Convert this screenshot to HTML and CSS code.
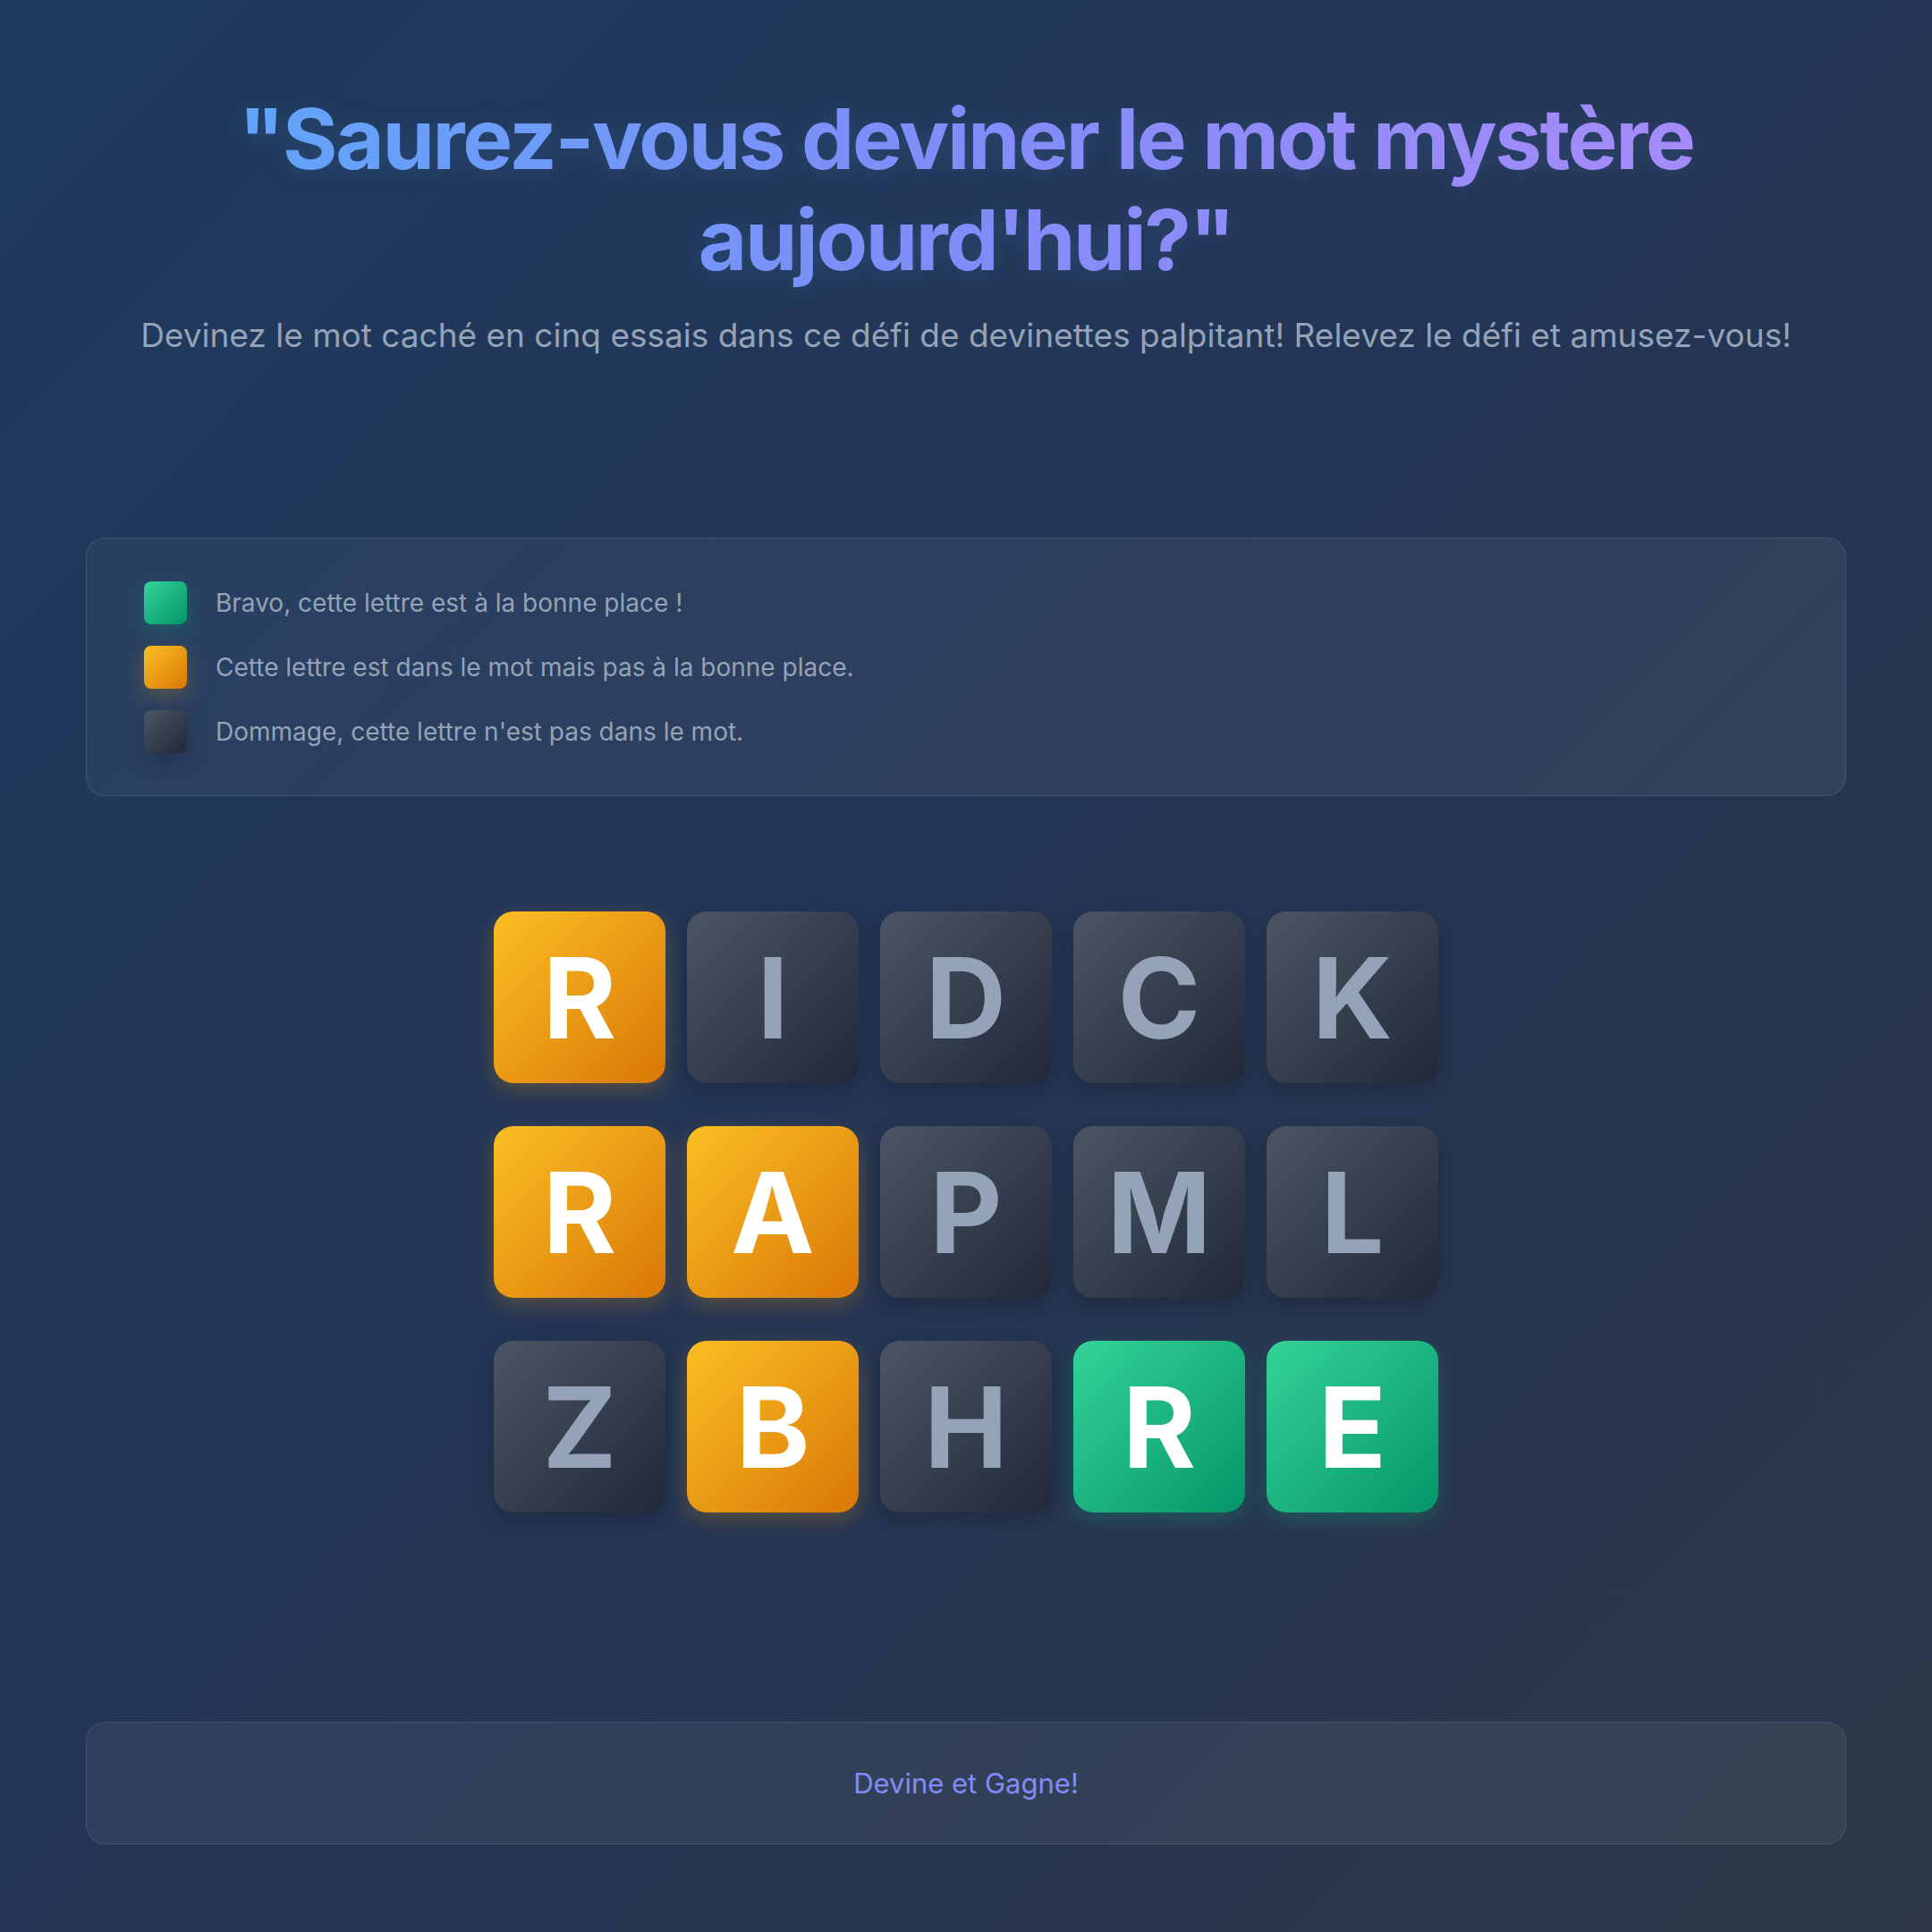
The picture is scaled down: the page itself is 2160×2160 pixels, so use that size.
FILE: index.html
```html
<!DOCTYPE html>
<html lang="fr">
<head>
<meta charset="utf-8">
<title>Devine et Gagne</title>
<link rel="stylesheet" href="styles.css">
</head>
<body>
<main class="page">
  <header class="hero">
    <h1 class="title">"Saurez-vous deviner le mot mystère aujourd'hui?"</h1>
    <p class="subtitle">Devinez le mot caché en cinq essais dans ce défi de devinettes palpitant! Relevez le défi et amusez-vous!</p>
  </header>

  <section class="legend">
    <div class="legend-row"><span class="swatch good"></span><span class="legend-text">Bravo, cette lettre est à la bonne place !</span></div>
    <div class="legend-row"><span class="swatch near"></span><span class="legend-text">Cette lettre est dans le mot mais pas à la bonne place.</span></div>
    <div class="legend-row"><span class="swatch miss"></span><span class="legend-text">Dommage, cette lettre n'est pas dans le mot.</span></div>
  </section>

  <section class="board">
    <div class="tile near">R</div>
    <div class="tile miss">I</div>
    <div class="tile miss">D</div>
    <div class="tile miss">C</div>
    <div class="tile miss">K</div>
    <div class="tile near">R</div>
    <div class="tile near">A</div>
    <div class="tile miss">P</div>
    <div class="tile miss">M</div>
    <div class="tile miss">L</div>
    <div class="tile miss">Z</div>
    <div class="tile near">B</div>
    <div class="tile miss">H</div>
    <div class="tile good">R</div>
    <div class="tile good">E</div>
  </section>

  <footer class="footer">
    <span class="footer-text">Devine et Gagne!</span>
  </footer>
</main>
</body>
</html>
```

FILE: styles.css
```css
html, body {
  margin: 0;
  padding: 0;
}

body {
  min-height: 2160px;
  background: linear-gradient(135deg, #1e3a5f 0%, #243555 50%, #2d3748 100%);
  font-family: Inter, "Noto Sans", sans-serif;
  color: #94a3b8;
}

.page {
  box-sizing: border-box;
  width: 2160px;
  height: 2160px;
  padding: 99px 96px 0;
  display: flex;
  flex-direction: column;
}

.hero {
  text-align: center;
}

.title {
  margin: 0 auto;
  max-width: 1700px;
  font-size: 94px;
  line-height: 113px;
  font-weight: 700;
  letter-spacing: -0.025em;
  background: linear-gradient(90deg, #60a5fa 0%, #818cf8 50%, #a78bfa 100%);
  -webkit-background-clip: text;
  background-clip: text;
  color: transparent;
  filter: drop-shadow(0 4px 12px rgba(96, 165, 250, 0.15));
}

.subtitle {
  margin: 21px 0 0;
  font-size: 37px;
  line-height: 57px;
  color: #94a3b8;
}

.legend {
  margin-top: 198px;
  box-sizing: border-box;
  height: 289px;
  padding: 48px 64px;
  border: 1px solid rgba(148, 163, 184, 0.2);
  border-radius: 22px;
  background: linear-gradient(135deg, rgba(255, 255, 255, 0.04), rgba(255, 255, 255, 0.06));
  display: flex;
  flex-direction: column;
  gap: 24px;
}

.legend-row {
  display: flex;
  align-items: center;
  gap: 32px;
  height: 48px;
}

.swatch {
  flex: none;
  width: 48px;
  height: 48px;
  border-radius: 8px;
}

.legend-text {
  font-size: 28px;
  color: #94a3b8;
}

.good {
  background: linear-gradient(135deg, #34d399 0%, #059669 100%);
  box-shadow: 0 8px 24px rgba(16, 185, 129, 0.25);
}

.near {
  background: linear-gradient(135deg, #fbbf24 0%, #d97706 100%);
  box-shadow: 0 8px 24px rgba(245, 158, 11, 0.25);
}

.miss {
  background: linear-gradient(135deg, #4b5563 0%, #1f2937 100%);
  box-shadow: 0 8px 24px rgba(0, 0, 0, 0.2);
}

.board {
  margin: 129px auto 0;
  display: grid;
  grid-template-columns: repeat(5, 192px);
  grid-auto-rows: 192px;
  gap: 48px 24px;
}

.tile {
  border-radius: 22px;
  display: flex;
  align-items: center;
  justify-content: center;
  font-size: 125px;
  font-weight: 700;
  color: #ffffff;
}

.tile.miss {
  color: #94a3b8;
}

.footer {
  margin-top: 234px;
  box-sizing: border-box;
  height: 137px;
  border: 1px solid rgba(148, 163, 184, 0.2);
  border-radius: 22px;
  background: rgba(255, 255, 255, 0.05);
  display: flex;
  align-items: center;
  justify-content: center;
}

.footer-text {
  font-size: 31px;
  color: #818cf8;
}
```
